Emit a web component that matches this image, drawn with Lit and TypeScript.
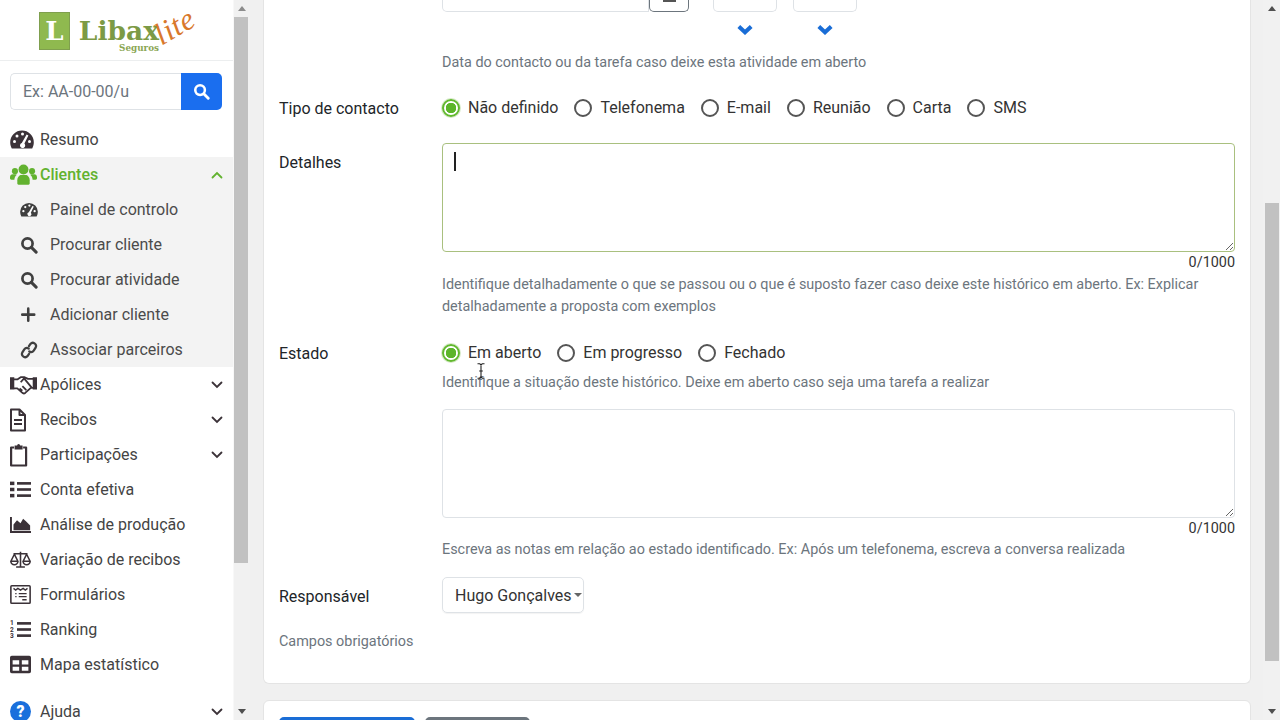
import { LitElement, html, css, svg } from "lit";
import { customElement } from "lit/decorators.js";

const ic = (body: unknown, vb = "0 0 24 24", cls = "") => html`<svg class="ic ${cls}" viewBox=${vb} xmlns="http://www.w3.org/2000/svg">${body}</svg>`;
const gauge = ic(svg`<path fill="currentColor" d="M12 2.500A11.800 11.800 0 0 0 .2 14.300c0 2.200.6 4.300 1.600 6.200h20.400c1-1.900 1.600-4 1.600-6.200A11.800 11.800 0 0 0 12 2.500z"/><g fill="#fff"><circle cx="4.500" cy="13.500" r="1.500"/><circle cx="7" cy="8" r="1.500"/><circle cx="12.500" cy="6" r="1.500"/><circle cx="19.500" cy="13.500" r="1.500"/><path d="M16.600 6.600l1.800.8-4 8.200a2.600 2.600 0 1 1-2.600-.6z"/></g>`, "0 0 24 24", "w24");
const users = ic(svg`<g fill="currentColor"><circle cx="12" cy="7.500" r="4.400"/><circle cx="4.400" cy="9" r="2.700"/><circle cx="19.600" cy="9" r="2.700"/><path d="M6.500 20v-3c0-2.800 2-4.600 3.600-4.600h3.800c1.600 0 3.600 1.800 3.600 4.600v3c0 .6-.5 1-1 1H7.500c-.5 0-1-.4-1-1z"/><path d="M0 14.500c0-1.600 1-2.700 2.400-2.700h2.400c.5 0 1 .2 1.300.5-1.300 1-2.100 2.500-2.200 4.300H1.200C.5 16.600 0 16 0 15.300zM24 14.500c0-1.600-1-2.700-2.400-2.700h-2.400c-.5 0-1 .2-1.300.5 1.300 1 2.100 2.500 2.200 4.300h2.700c.7 0 1.200-.6 1.200-1.300z"/></g>`, "0 0 24 24", "w27");
const search = ic(svg`<circle cx="10" cy="10" r="6.800" fill="none" stroke="currentColor" stroke-width="3.600"/><path d="M15.200 15.200l6.300 6.300" stroke="currentColor" stroke-width="4" stroke-linecap="round"/>`);
const plus = ic(svg`<path d="M11 3.500v16M3 11.500h16" stroke="currentColor" stroke-width="3.400" stroke-linecap="round"/>`);
const link = ic(svg`<g transform="rotate(-12 12 12)" fill="none" stroke="currentColor" stroke-width="3" stroke-linecap="round"><path d="M13 7l2.500-2.500a4.300 4.300 0 0 1 6 6l-3.500 3.500a4.300 4.300 0 0 1-6 0"/><path d="M11 17l-2.500 2.500a4.300 4.300 0 0 1-6-6L6 10a4.300 4.300 0 0 1 6 0"/></g>`);
const handshake = ic(svg`<g fill="currentColor"><path d="M0 5.500h3.800v11H0zM24 5.500h-3.800v11H24z"/></g><path d="M3.500 7.500h3l3-2h3.500l3 1.500h4.500M20.500 15h-2l-5 4.500c-1 .8-2.200.3-3-.5l-4-3.500h-3M9.500 10l3-3.500 7 8.500M8.500 15.500l2.500 2M11 13.500l3.500 3.500" fill="none" stroke="currentColor" stroke-width="1.600" stroke-linejoin="round"/>`, "0 0 24 24", "w27");
const file = ic(svg`<path d="M5.500 1.500h8.500l5.500 5.500v15.500h-14zM14 1.500V7h5.500M8.500 12h8M8.500 16h8" fill="none" stroke="currentColor" stroke-width="2" stroke-linejoin="round"/>`, "4.500 0 24 24", "w24");
const clip = ic(svg`<path d="M7.500 4.500H4.500v18h15v-18h-3" fill="none" stroke="currentColor" stroke-width="2.200" stroke-linejoin="round"/><path d="M8 2.500h2.500a1.500 1.500 0 0 1 3 0H16v4H8z" fill="currentColor"/>`, "3.400 0 24 24", "w24");
const list = ic(svg`<g fill="currentColor"><rect x="0" y="3" width="5" height="4"/><rect x="0" y="10" width="5" height="4"/><rect x="0" y="17" width="5" height="4"/><rect x="8" y="3.500" width="16" height="3"/><rect x="8" y="10.500" width="16" height="3"/><rect x="8" y="17.500" width="16" height="3"/></g>`);
const area = ic(svg`<path d="M1 3.500v17h23" fill="none" stroke="currentColor" stroke-width="2.400"/><path d="M4 18.500v-6.500l4-5 4 3.500 3-5 3.500 3 4.500 4.500v5.500z" fill="currentColor"/>`);
const scale = ic(svg`<g fill="none" stroke="currentColor" stroke-width="1.800" stroke-linejoin="round"><path d="M12 3v17M7 20.500h10M4 5.500h16M5 6l-4 8h8zM19 6l-4 8h8z"/><path d="M1 14a4 4 0 0 0 8 0M15 14a4 4 0 0 0 8 0"/></g>`);
const form = ic(svg`<rect x="1" y="2" width="22" height="20" rx="1" fill="none" stroke="currentColor" stroke-width="1.800"/><path d="M4 5l2.500 2 2.500-2 3 2 3-2 2.500 2 2.500-2M6 11h1.500M10 11h9M6 14.500h1.500M10 14.500h9M14 18h5" fill="none" stroke="currentColor" stroke-width="1.500"/>`);
const rank = ic(svg`<g fill="currentColor"><rect x="8" y="3.500" width="16" height="3"/><rect x="8" y="10.500" width="16" height="3"/><rect x="8" y="17.500" width="16" height="3"/></g><g fill="currentColor" font-family="Roboto, sans-serif" font-size="7.500" font-weight="700" text-anchor="middle"><text x="2.200" y="7">1</text><text x="2.200" y="14.500">2</text><text x="2.200" y="22">3</text></g>`);
const table = ic(svg`<path fill="currentColor" fill-rule="evenodd" d="M2 2h20a2 2 0 0 1 2 2v16a2 2 0 0 1-2 2H2a2 2 0 0 1-2-2V4a2 2 0 0 1 2-2zM3 7v5h7.500V7zM13.500 7v5H21V7zM3 14.500V19h7.500v-4.500zM13.500 14.500V19H21v-4.500z"/>`);
const help = ic(svg`<circle cx="12" cy="12" r="12" fill="#1a6fdc"/><text x="12" y="18.500" fill="#fff" font-family="Roboto, sans-serif" font-weight="900" font-size="18" text-anchor="middle">?</text>`);
const chevD = html`<svg class="chev" viewBox="0 0 12 8"><path d="M1.500 1.500L6 6l4.500-4.500" fill="none" stroke="currentColor" stroke-width="1.800" stroke-linecap="round"/></svg>`;
const chevU = html`<svg class="chev" viewBox="0 0 12 8"><path d="M1.500 6.500L6 2l4.500 4.500" fill="none" stroke="currentColor" stroke-width="1.800" stroke-linecap="round"/></svg>`;
const blueChev = html`<svg class="bchev" viewBox="0 0 16 11"><path d="M1.800 2.500L8 8.300l6.200-5.800" fill="none" stroke="currentColor" stroke-width="4"/></svg>`;

@customElement("app-root")
export class AppRoot extends LitElement {
  static styles = css`
    :host { display: flex; width: 1280px; height: 720px; overflow: hidden; position: relative; background: #f0f0f0; font-family: Roboto, "Liberation Sans", sans-serif; font-size: 16px; color: #212529; }
    * { box-sizing: border-box; }
    .side { width: 233px; height: 720px; flex: none; background: #fff; overflow: hidden; display: flex; flex-direction: column; }
    .logo { height: 61px; flex: none; border-bottom: 1px solid #eceeef; display: flex; padding: 12px 0 0 39px; position: relative; }
    .lsq { width: 31px; height: 38px; background: #8fb94f; border: 1px solid #7f9f4e; display: flex; justify-content: center; align-items: center; color: #fff; font: 700 26px "DejaVu Serif", serif; }
    .lname { margin-left: 11px; display: flex; flex-direction: column; align-items: flex-end; width: 78px; padding-top: 6px; color: #7c9a45; font: 700 26.500px/26px "DejaVu Serif", serif; white-space: nowrap; }
    .lname small { font: 700 8.800px/8px "DejaVu Serif", serif; color: #8aa653; }
    .lite { position: absolute; left: 164px; top: 20px; color: #d9782c; font: italic 400 31px/30px "Liberation Serif", serif; letter-spacing: .5px; transform: rotate(-30deg); transform-origin: left bottom; }
    .search { display: flex; margin: 12px 11px 0 10px; height: 37px; flex: none; }
    .search .inp { flex: 1; border: 1px solid #dee2e6; border-right: 0; border-radius: 5px 0 0 5px; padding-left: 12px; display: flex; align-items: center; color: #6c757d; }
    .search .btn { width: 41px; background: #1a6eef; border-radius: 0 5px 5px 0; display: flex; align-items: center; justify-content: center; }
    .search .btn .ic { width: 17px; height: 17px; color: #fff; }
    nav { margin-top: 12px; display: flex; flex-direction: column; }
    .item { height: 35px; display: flex; align-items: center; padding: 0 10px; color: #444; flex: none; }
    .ic { width: 21px; height: 21px; flex: none; color: #3b3238; display: block; }
    .item .ic { margin-right: 9px; }
    .item .w24 { width: 24px; height: 24px; margin-right: 6px; }
    .item .w27 { width: 27px; height: 27px; margin-right: 3px; }
    .item span { flex: 1; white-space: nowrap; }
    .chev { width: 12px; height: 8px; color: #3b3238; flex: none; margin-right: 0; }
    .group { background: #f3f3f3; }
    .active { color: #62b22f; font-weight: 500; }
    .active .ic, .active .chev { color: #62b22f; }
    .sub { padding-left: 20px; color: #4b4b4b; }
    .sub .ic, .sub .w24 { width: 18px; height: 18px; margin-right: 12px; color: #3f3f3f; }
    .ajuda { margin-top: 12px; }
    .sbar { width: 17px; flex: none; background: #f1f1f1; display: flex; flex-direction: column; height: 720px; align-items: stretch; }
    .arrow { height: 17px; flex: none; display: flex; align-items: center; justify-content: center; }
    .arrow i { width: 0; height: 0; border-left: 4px solid transparent; border-right: 4px solid transparent; }
    .up i { border-bottom: 5px solid #8c8c8c; }
    .right .up i { border-bottom-color: #505050; }
    .down i { border-top: 5px solid #505050; }
    .track { flex: 1; position: relative; }
    .thumb { background: #c1c1c1; }
    .sbar.left { border-left: 1px solid #f8f8f8; }
    .sbar.left .thumb { height: 546px; margin: 0 2px 0 0; }
    .sbar.right .thumb { height: 458px; margin: 186px 1px 0 2px; }
    .main { width: 1013px; flex: none; padding: 0 12px 0 13px; height: 720px; overflow: hidden; }
    .card { background: #fff; border: 1px solid #e4e4e4; border-top: 0; border-radius: 0 0 6px 6px; padding: 0 15px 30px; width: 988px; }
    .form-row { display: grid; grid-template-columns: 163px 793px; }
    .lab { line-height: 24px; padding-top: 1px; }
    .top { display: flex; height: 12px; overflow: hidden; }
    .box { height: 12px; border: 1px solid #dee2e6; border-top: 0; flex: none; background: #fff; border-radius: 0 0 5px 5px; }
    .b1 { width: 207px; border-radius: 0 0 0 5px; }
    .b2 { width: 40px; border-color: #6c757d; border-radius: 0 0 5px 5px; display: flex; justify-content: center; }
    .b2 i { display: block; width: 13px; height: 2px; background: #555; }
    .b3, .b4 { width: 64px; }
    .b3 { margin-left: 24px; }
    .b4 { margin-left: 16px; }
    .chevs { display: flex; height: 12px; margin-top: 12px; }
    .bchev { width: 16px; height: 11px; display: block; color: #1a6dd6; }
    .chevs .c1 { margin-left: 295px; }
    .chevs .c2 { margin-left: 64px; }
    .hint { font-size: 14.400px; line-height: 22px; color: #6c757d; }
    .m15 { margin-top: 15px; } .m16 { margin-top: 16px; } .m22 { margin-top: 22px; } .m23 { margin-top: 23px; } .m7 { margin-top: 7px; } .m18 { margin-top: 18px; } .mn1 { margin-top: -1px; }
    .radios { display: flex; align-items: center; height: 24px; line-height: 24px; color: #333; }
    .radio { display: flex; align-items: center; margin-right: 16px; }
    .radio i { width: 18px; height: 18px; border: 2px solid #555; border-radius: 50%; margin-right: 8px; background: #fff; flex: none; display: block; }
    .radio.on i { border-color: #62b82e; background: radial-gradient(circle, #5cb52a 0 5px, #fff 5.500px); box-shadow: 0 0 0 1px #d6eac8; }
    .tawrap { position: relative; height: 109px; }
    textarea { display: block; width: 793px; height: 109px; border: 1px solid #dee2e6; border-radius: 4px; padding: 6px 12px; outline: none; resize: vertical; background: #fff; font: inherit; margin: 0; }
    textarea.focus { border-color: #a9c07f; }
    .caret { position: absolute; left: 12px; top: 9px; width: 2px; height: 19px; background: #222; }
    .count { text-align: right; font-size: 14.400px; line-height: 22px; color: #333; }
    .pad8 { padding-top: 8px; }
    .sel { width: 142px; height: 36px; border: 1px solid #dee2e6; border-radius: 5px; display: flex; align-items: center; padding-left: 12px; color: #333; box-shadow: 0 1px 1px rgba(0,0,0,.05); white-space: nowrap; }
    .sel i { width: 0; height: 0; border-left: 4px solid transparent; border-right: 4px solid transparent; border-top: 4px solid #666; margin-left: 2px; }
    .req { line-height: 22px; font-size: 14.400px; color: #6c757d; }
    .card2 { margin-top: 16px; background: #fff; border: 1px solid #e4e4e4; border-radius: 6px 6px 0 0; padding: 16px 15px; width: 988px; height: 80px; display: flex; gap: 10px; }
    .bt { height: 38px; border-radius: 5px; flex: none; }
    .blue { width: 136px; background: #1a6dd6; }
    .gray { width: 105px; background: #6c757d; }
    .cursor { position: absolute; left: 476px; top: 363px; width: 10px; height: 16px; }
  `;

  private item(icon: unknown, label: string, cls = "", tail: unknown = "") {
    return html`<div class="item ${cls}">${icon}<span>${label}</span>${tail}</div>`;
  }
  private radio(label: string, on = false) {
    return html`<div class="radio ${on ? "on" : ""}"><i></i>${label}</div>`;
  }

  render() {
    return html`
      <aside class="side">
        <div class="logo">
          <div class="lsq">L</div>
          <div class="lname">Libax<small>Seguros</small></div>
          <div class="lite">lite</div>
        </div>
        <div class="search">
          <div class="inp">Ex: AA-00-00/u</div>
          <div class="btn">${search}</div>
        </div>
        <nav>
          ${this.item(gauge, "Resumo")}
          <div class="group">
            ${this.item(users, "Clientes", "active", chevU)}
            ${this.item(gauge, "Painel de controlo", "sub")}
            ${this.item(search, "Procurar cliente", "sub")}
            ${this.item(search, "Procurar atividade", "sub")}
            ${this.item(plus, "Adicionar cliente", "sub")}
            ${this.item(link, "Associar parceiros", "sub")}
          </div>
          ${this.item(handshake, "Apólices", "", chevD)}
          ${this.item(file, "Recibos", "", chevD)}
          ${this.item(clip, "Participações", "", chevD)}
          ${this.item(list, "Conta efetiva")}
          ${this.item(area, "Análise de produção")}
          ${this.item(scale, "Variação de recibos")}
          ${this.item(form, "Formulários")}
          ${this.item(rank, "Ranking")}
          ${this.item(table, "Mapa estatístico")}
          ${this.item(help, "Ajuda", "ajuda", chevD)}
        </nav>
      </aside>
      <div class="sbar left">
        <div class="arrow up"><i></i></div>
        <div class="track"><div class="thumb"></div></div>
        <div class="arrow down"><i></i></div>
      </div>
      <main class="main">
        <div class="card">
          <div class="form-row">
            <div></div>
            <div>
              <div class="top">
                <div class="box b1"></div><div class="box b2"><i></i></div><div class="box b3"></div><div class="box b4"></div>
              </div>
              <div class="chevs"><div class="c1">${blueChev}</div><div class="c2">${blueChev}</div></div>
              <div class="hint m16">Data do contacto ou da tarefa caso deixe esta atividade em aberto</div>
            </div>
          </div>
          <div class="form-row m22">
            <div class="lab">Tipo de contacto</div>
            <div class="radios">
              ${this.radio("Não definido", true)}${this.radio("Telefonema")}${this.radio("E-mail")}${this.radio("Reunião")}${this.radio("Carta")}${this.radio("SMS")}
            </div>
          </div>
          <div class="form-row m22">
            <div class="lab pad8">Detalhes</div>
            <div>
              <div class="tawrap"><textarea class="focus"></textarea><div class="caret"></div></div>
              <div class="count">0/1000</div>
              <div class="hint">Identifique detalhadamente o que se passou ou o que é suposto fazer caso deixe este histórico em aberto. Ex: Explicar detalhadamente a proposta com exemplos</div>
            </div>
          </div>
          <div class="form-row m23">
            <div class="lab">Estado</div>
            <div>
              <div class="radios">${this.radio("Em aberto", true)}${this.radio("Em progresso")}${this.radio("Fechado")}</div>
              <div class="hint m7">Identifique a situação deste histórico. Deixe em aberto caso seja uma tarefa a realizar</div>
              <div class="tawrap m15"><textarea></textarea></div>
              <div class="count">0/1000</div>
              <div class="hint mn1">Escreva as notas em relação ao estado identificado. Ex: Após um telefonema, escreva a conversa realizada</div>
            </div>
          </div>
          <div class="form-row m16">
            <div class="lab pad8">Responsável</div>
            <div class="sel">Hugo Gonçalves<i></i></div>
          </div>
          <div class="req m18">Campos obrigatórios</div>
        </div>
        <div class="card2"><div class="bt blue"></div><div class="bt gray"></div></div>
      </main>
      <div class="sbar right">
        <div class="arrow up"><i></i></div>
        <div class="track"><div class="thumb"></div></div>
        <div class="arrow down"><i></i></div>
      </div>
      <svg class="cursor" viewBox="0 0 10 16"><path d="M1.500 .7h2.200l1.300 1 1.300-1h2.200M5 1.700v12.600M1.500 15.300h2.200l1.300-1 1.300 1h2.200M3.200 8h3.600" fill="none" stroke="#222" stroke-width="1.100"/></svg>
    `;
  }
}
